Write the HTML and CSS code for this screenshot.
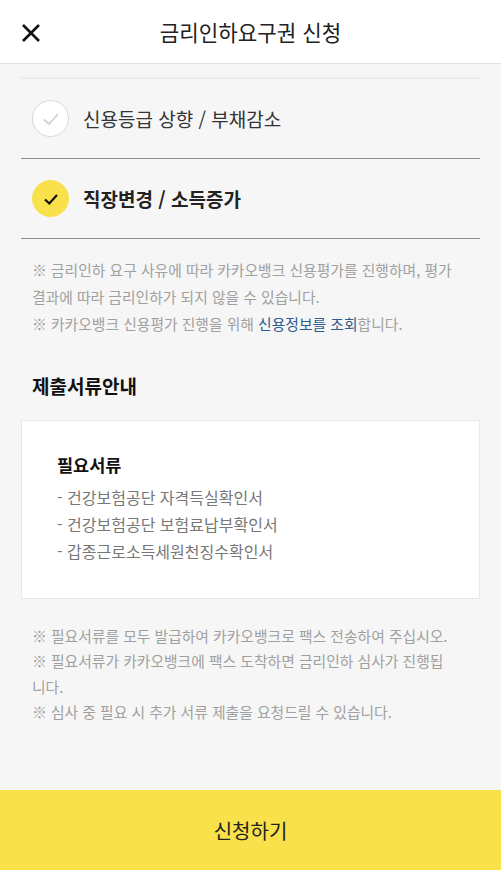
FILE: index.html
```html
<!DOCTYPE html>
<html lang="ko">
<head>
  <meta charset="UTF-8" />
  <title>금리인하요구권 신청</title>
  <meta name="viewport" content="width=device-width, initial-scale=1.0" />
  <link rel="stylesheet" href="styles.css">
</head>
<body>
  <header class="topbar">
    <button class="close" aria-label="닫기">
      <svg width="20" height="20" viewBox="0 0 20 20">
        <path d="M2 2 L18 18 M18 2 L2 18" stroke="#111" stroke-width="2.6" fill="none" />
      </svg>
    </button>
    <h1>금리인하요구권 신청</h1>
  </header>

  <main class="content">
    <div class="prev-row"></div>

    <div class="option">
      <span class="check">
        <svg width="22" height="22" viewBox="0 0 22 22">
          <path d="M4 11.5 L9 16 L18 6" stroke="#d2d2d2" stroke-width="1.8" fill="none" />
        </svg>
      </span>
      <span class="option-label">신용등급 상향 / 부채감소</span>
    </div>

    <div class="option selected">
      <span class="check">
        <svg width="20" height="20" viewBox="0 0 20 20">
          <path d="M4 10.5 L8.3 14.5 L16 6" stroke="#111" stroke-width="2.2" fill="none" />
        </svg>
      </span>
      <span class="option-label">직장변경 / 소득증가</span>
    </div>

    <p class="notice top-notice">
      ※ 금리인하 요구 사유에 따라 카카오뱅크 신용평가를 진행하며, 평가 결과에 따라 금리인하가 되지 않을 수 있습니다.<br>
      ※ 카카오뱅크 신용평가 진행을 위해 <a href="#" class="link">신용정보를 조회</a>합니다.
    </p>

    <h2 class="section-title">제출서류안내</h2>

    <div class="doc-box">
      <h3>필요서류</h3>
      <ul class="doc-list">
        <li>- 건강보험공단 자격득실확인서</li>
        <li>- 건강보험공단 보험료납부확인서</li>
        <li>- 갑종근로소득세원천징수확인서</li>
      </ul>
    </div>

    <p class="notice bottom-notice">
      ※ 필요서류를 모두 발급하여 카카오뱅크로 팩스 전송하여 주십시오.<br>
      ※ 필요서류가 카카오뱅크에 팩스 도착하면 금리인하 심사가 진행됩니다.<br>
      ※ 심사 중 필요 시 추가 서류 제출을 요청드릴 수 있습니다.
    </p>
  </main>

  <button class="submit">신청하기</button>
</body>
</html>
```

FILE: styles.css
```css
* {
  box-sizing: border-box;
}

body {
  margin: 0;
  background: #f6f6f6;
  font-family: "Noto Sans CJK KR", "Noto Sans", sans-serif;
  color: #222;
  height: 870px;
  overflow: hidden;
  display: flex;
  flex-direction: column;
}

.topbar {
  height: 64px;
  background: #fff;
  border-bottom: 1px solid #e2e2e2;
  display: flex;
  align-items: center;
  justify-content: center;
  position: relative;
}

.topbar h1 {
  margin: 0;
  font-size: 21.2px;
  font-weight: 400;
  color: #222;
}

.close {
  position: absolute;
  left: 21px;
  top: 23px;
  padding: 0;
  border: none;
  background: none;
  width: 20px;
  height: 20px;
}

.content {
  flex: 1;
  padding: 0 21px;
}

.prev-row {
  height: 15px;
  border-bottom: 2px solid #ebebeb;
}

.option {
  height: 80px;
  display: flex;
  align-items: center;
  gap: 14px;
  padding-left: 11px;
  border-bottom: 1px solid #8c8c8c;
}

.check {
  width: 37px;
  height: 37px;
  border-radius: 50%;
  background: #fff;
  border: 1px solid #d8d8d8;
  display: flex;
  align-items: center;
  justify-content: center;
}

.option-label {
  font-size: 19px;
  color: #333;
}

.selected .check {
  background: #f9e14b;
  border-color: #f9e14b;
}

.selected .option-label {
  font-weight: 700;
  color: #222;
}

.notice {
  margin: 0;
  padding: 0 26px 0 11px;
  font-size: 14.8px;
  line-height: 27px;
  color: #a0a0a0;
}

.top-notice {
  margin-top: 17px;
}

.link {
  color: #2c5b8e;
  text-decoration: none;
}

.section-title {
  margin: 35px 0 0 11px;
  font-size: 19px;
  font-weight: 700;
  color: #111;
}

.doc-box {
  margin-top: 21px;
  height: 179px;
  background: #fff;
  border: 1px solid #e8e8e8;
  padding: 31px 35px;
}

.doc-box h3 {
  margin: 0 0 7px;
  font-size: 17.5px;
  font-weight: 700;
  color: #111;
}

.doc-list {
  list-style: none;
  margin: 0;
  padding: 0;
  font-size: 16px;
  line-height: 27px;
  color: #777;
}

.bottom-notice {
  margin-top: 24px;
  line-height: 25.4px;
}

.submit {
  height: 80px;
  width: 100%;
  border: none;
  background: #f9e14b;
  font-family: inherit;
  font-size: 20px;
  color: #222;
  flex-shrink: 0;
}
```
